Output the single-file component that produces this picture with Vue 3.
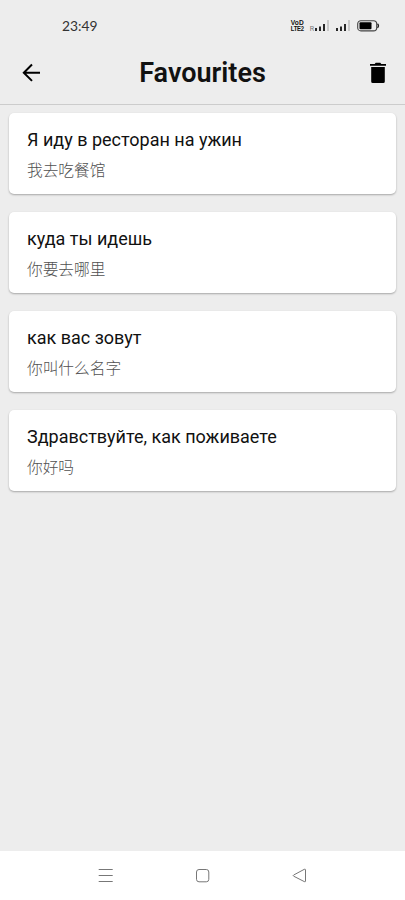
<script setup>
const favourites = [
  { source: 'Я иду в ресторан на ужин', translation: '我去吃餐馆' },
  { source: 'куда ты идешь', translation: '你要去哪里' },
  { source: 'как вас зовут', translation: '你叫什么名字' },
  { source: 'Здравствуйте, как поживаете', translation: '你好吗' },
]
</script>

<template>
  <div class="screen">
    <div class="status">
      <span class="clock">23:49</span>
      <div class="indicators">
        <div class="volte"><span>VoD</span><span>LTE2</span></div>
        <span class="roaming">R</span>
        <svg class="signal first" width="15" height="12" viewBox="0 0 15 12">
          <path d="M2 8V11M6 6.5V11M10 4V11" stroke="#111" stroke-width="1.8" />
          <path d="M14 0V11" stroke="#c4c4c4" stroke-width="1.8" />
        </svg>
        <svg class="signal second" width="15" height="12" viewBox="0 0 15 12">
          <path d="M2 8V11M6 6.5V11M10 4V11" stroke="#111" stroke-width="1.8" />
          <path d="M14 0V11" stroke="#c4c4c4" stroke-width="1.8" />
        </svg>
        <svg class="battery" width="23" height="12" viewBox="0 0 23 12">
          <rect x=".7" y=".7" width="19" height="10.2" rx="3.2" fill="none" stroke="#444" stroke-width="1.1" />
          <rect x="2.5" y="2.3" width="12" height="7" rx="1" fill="#000" />
          <path d="M20.5 3.7Q22.4 5.8 20.5 7.9" fill="none" stroke="#222" stroke-width="1.3" />
        </svg>
      </div>
    </div>
    <header class="bar">
      <svg class="back" width="20" height="20" viewBox="0 0 20 20">
        <path d="M19 9.7H3M11 1.5L2.8 9.7L11 17.9" fill="none" stroke="#000" stroke-width="2" />
      </svg>
      <h1>Favourites</h1>
      <svg class="trash" width="16" height="21" viewBox="0 0 16 21">
        <path d="M0 1.9H4.7L5.7 .7H10.3L11.3 1.9H16V3.8H0ZM1.2 5H14.8V19.4Q14.8 20.9 13.3 20.9H2.7Q1.2 20.9 1.2 19.4Z" />
      </svg>
    </header>
    <main class="list">
      <article v-for="item in favourites" :key="item.source" class="card">
        <p class="source">{{ item.source }}</p>
        <p class="translation">{{ item.translation }}</p>
      </article>
    </main>
    <nav class="navigation">
      <svg width="16" height="16" viewBox="0 0 16 16"><path d="M.7 1.5H14.7M.7 7.5H14.7M.7 13.5H14.7" /></svg>
      <svg width="16" height="16" viewBox="0 0 16 16"><rect x="1.5" y="1.5" width="12.3" height="12.3" rx="2.5" /></svg>
      <svg width="16" height="16" viewBox="0 0 16 16"><path d="M2.7 7L13.3 1.3Q14.5 .8 14.5 2V13Q14.5 14.2 13.3 13.6L2.7 8.2Q1.7 7.6 2.7 7Z" /></svg>
    </nav>
  </div>
</template>

<style>
body { margin: 0; background: #ededed; }
</style>

<style scoped>
.screen { width: 405px; height: 900px; display: flex; flex-direction: column; background: #ededed; font-family: Roboto, "Noto Sans CJK SC", sans-serif; color: #111; overflow: hidden; }
.status { height: 40px; box-sizing: border-box; padding: 17px 25px 0 62px; display: flex; justify-content: space-between; align-items: flex-start; }
.clock { font: 400 13.8px/18px Lato, sans-serif; color: #333; }
.indicators { display: flex; align-items: flex-start; padding-top: 3px; }
.volte { width: 15px; margin-top: -1px; display: flex; flex-direction: column; font: 700 6.6px/6.5px "Liberation Sans", sans-serif; color: #111; white-space: nowrap; transform: scaleY(1.15); transform-origin: top; }
.volte span { height: 5.6px; line-height: 5.6px; }
.volte span:first-child { letter-spacing: .15px; }
.volte span:last-child { font-size: 5.9px; letter-spacing: -.2px; }
.roaming { font: 7px/8px Roboto, sans-serif; color: #777; padding: 5px 0 0 4px; }
.signal.second { margin-left: 6px; }
.battery { margin-left: 7px; }
.bar { height: 65px; box-sizing: border-box; border-bottom: 1px solid #ccc; display: flex; align-items: center; justify-content: space-between; padding: 1px 19px 0 21px; }
h1 { margin: 1px 6px 0 0; font-size: 27px; line-height: 32px; font-weight: 600; }
.list { flex: 1; padding: 8px 9px; display: flex; flex-direction: column; gap: 18px; }
.card { height: 81px; box-sizing: border-box; padding: 15px 18px; border-radius: 5px; background: #fff; box-shadow: 0 1px 2px #0000004d; }
p { margin: 0; white-space: nowrap; }
.source { font-size: 18px; line-height: 24px; }
.translation { margin-top: 7px; font-size: 15.7px; line-height: 24px; font-weight: 300; color: #505050; }
.navigation { height: 49px; flex: none; background: #fff; display: flex; justify-content: space-between; align-items: center; padding: 0 98px; box-sizing: border-box; }
.navigation path, .navigation rect { fill: none; stroke: #777; stroke-width: 1; }
</style>
